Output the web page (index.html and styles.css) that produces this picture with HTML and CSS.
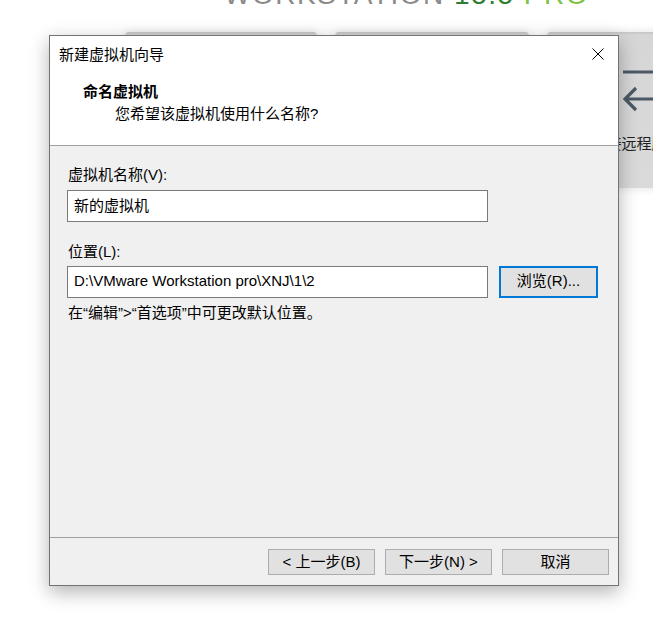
FILE: index.html
```html
<!DOCTYPE html>
<html lang="zh-CN">
<head>
<meta charset="utf-8">
<title>新建虚拟机向导</title>
<link rel="stylesheet" href="styles.css">
</head>
<body>
<div class="screen">
  <div class="brand">
    <span class="brand-text"><span class="ws">WORKSTATION</span> <span class="ver">15.5</span> <span class="pro">PRO</span></span>
  </div>
  <div class="tiles">
    <div class="tile tile-a"></div>
    <div class="tile tile-b"></div>
    <div class="tile tile-remote">
      <svg class="tile-icon" width="48" height="52" viewBox="0 0 48 52">
        <path d="M1 11 H44 M34 1 L45 11 L34 21" fill="none" stroke="#4b5967" stroke-width="3.2"/>
        <path d="M4 38 H48 M14 27 L3 38 L14 49" fill="none" stroke="#4b5967" stroke-width="3.2"/>
      </svg>
      <div class="tile-label">连接远程服务器</div>
    </div>
  </div>

  <div class="dialog">
    <div class="titlebar">
      <span class="title">新建虚拟机向导</span>
      <svg class="close" width="12" height="12" viewBox="0 0 12 12">
        <path d="M0.5 0.5 L11.5 11.5 M11.5 0.5 L0.5 11.5" stroke="#000" stroke-width="1"/>
      </svg>
    </div>
    <div class="header">
      <div class="header-title">命名虚拟机</div>
      <div class="header-sub">您希望该虚拟机使用什么名称?</div>
    </div>
    <div class="content">
      <div class="label label-first">虚拟机名称(V):</div>
      <input class="field" type="text" value="新的虚拟机">
      <div class="label label-second">位置(L):</div>
      <div class="row">
        <input class="field" type="text" value="D:\VMware Workstation pro\XNJ\1\2">
        <button class="btn btn-browse">浏览(R)...</button>
      </div>
      <div class="hint">在“编辑”&gt;“首选项”中可更改默认位置。</div>
    </div>
    <div class="footer">
      <button class="btn btn-foot">&lt; 上一步(B)</button>
      <button class="btn btn-foot">下一步(N) &gt;</button>
      <button class="btn btn-foot">取消</button>
    </div>
  </div>
</div>
</body>
</html>
```

FILE: styles.css
```css
html, body {
  margin: 0;
  padding: 0;
  background: #ffffff;
}

.screen {
  position: relative;
  width: 653px;
  height: 640px;
  overflow: hidden;
  background: #ffffff;
  font-family: "Liberation Sans", "Noto Sans CJK SC", sans-serif;
  font-size: 15px;
  color: #000;
}

/* background app */
.brand {
  height: 5px;
  overflow: hidden;
  padding-left: 224px;
}

.brand-text {
  display: block;
  margin-top: -19px;
  font-family: "Liberation Sans", sans-serif;
  font-size: 28px;
  line-height: 28px;
  letter-spacing: 1.5px;
  white-space: nowrap;
}

.brand-text .ws { color: #8a8a8a; }
.brand-text .ver { color: #2f7d32; }
.brand-text .pro { color: #7cc143; }

.tiles {
  display: flex;
  gap: 18px;
  margin-top: 27px;
  padding-left: 125px;
}

.tile {
  flex: none;
  height: 156px;
  border-radius: 4px;
  background: linear-gradient(#c4c4c4 0, #d6d6d6 3px, #dadada 100%);
  box-shadow: 0 0 10px rgba(0, 0, 0, 0.12);
}

.tile-a { width: 192px; }
.tile-b { width: 194px; }

.tile-remote {
  width: 194px;
  display: flex;
  flex-direction: column;
  align-items: center;
}

.tile-icon {
  margin-top: 29px;
  margin-left: 3px;
}

.tile-label {
  margin-top: 21px;
  line-height: 20px;
  color: #1e1e1e;
  white-space: nowrap;
}

/* dialog window */
.dialog {
  position: absolute;
  left: 49px;
  top: 35px;
  width: 570px;
  height: 551px;
  box-sizing: border-box;
  border: 1px solid #737373;
  background: #f0f0f0;
  display: flex;
  flex-direction: column;
  box-shadow: 0 6px 18px rgba(0, 0, 0, 0.3);
}

.titlebar {
  flex: none;
  height: 38px;
  background: #fff;
  display: flex;
  align-items: center;
  justify-content: space-between;
  padding: 0 14px 0 9px;
}

.title {
  line-height: 20px;
}

.close {
  margin-top: -2px;
}

.header {
  flex: none;
  box-sizing: border-box;
  background: #fff;
  border-bottom: 1px solid #a0a0a0;
  height: 72px;
  padding: 7px 0 0 33px;
}

.header-title {
  font-weight: bold;
  line-height: 22px;
}

.header-sub {
  line-height: 22px;
  padding-left: 32px;
}

.content {
  flex: 1;
  padding: 0 0 0 17px;
  border-bottom: 1px solid #a0a0a0;
}

.label {
  line-height: 20px;
  padding-left: 1px;
}

.label-first { margin-top: 19px; margin-bottom: 5px; }
.label-second { margin-top: 20px; margin-bottom: 4px; }

.field {
  display: block;
  width: 421px;
  height: 32px;
  box-sizing: border-box;
  margin: 0;
  border: 1px solid #7a7a7a;
  background: #fff;
  padding: 0 6px 4px;
  font: inherit;
  color: #000;
  outline: none;
}

.row {
  display: flex;
  gap: 11px;
}

.btn {
  font: inherit;
  color: #000;
  background: #e1e1e1;
  border: 1px solid #adadad;
  margin: 0;
  padding: 0;
  box-sizing: border-box;
  line-height: 20px;
}

.btn-browse {
  width: 99px;
  height: 32px;
  border: 2px solid #0078d7;
  padding-bottom: 2px;
}

.hint {
  margin-top: 5px;
  line-height: 20px;
  padding-left: 1px;
}

.footer {
  flex: none;
  height: 47px;
  box-sizing: border-box;
  display: flex;
  justify-content: flex-end;
  gap: 10px;
  padding: 11px 9px 0 0;
}

.btn-foot {
  width: 107px;
  height: 26px;
  padding-bottom: 1px;
}
```
